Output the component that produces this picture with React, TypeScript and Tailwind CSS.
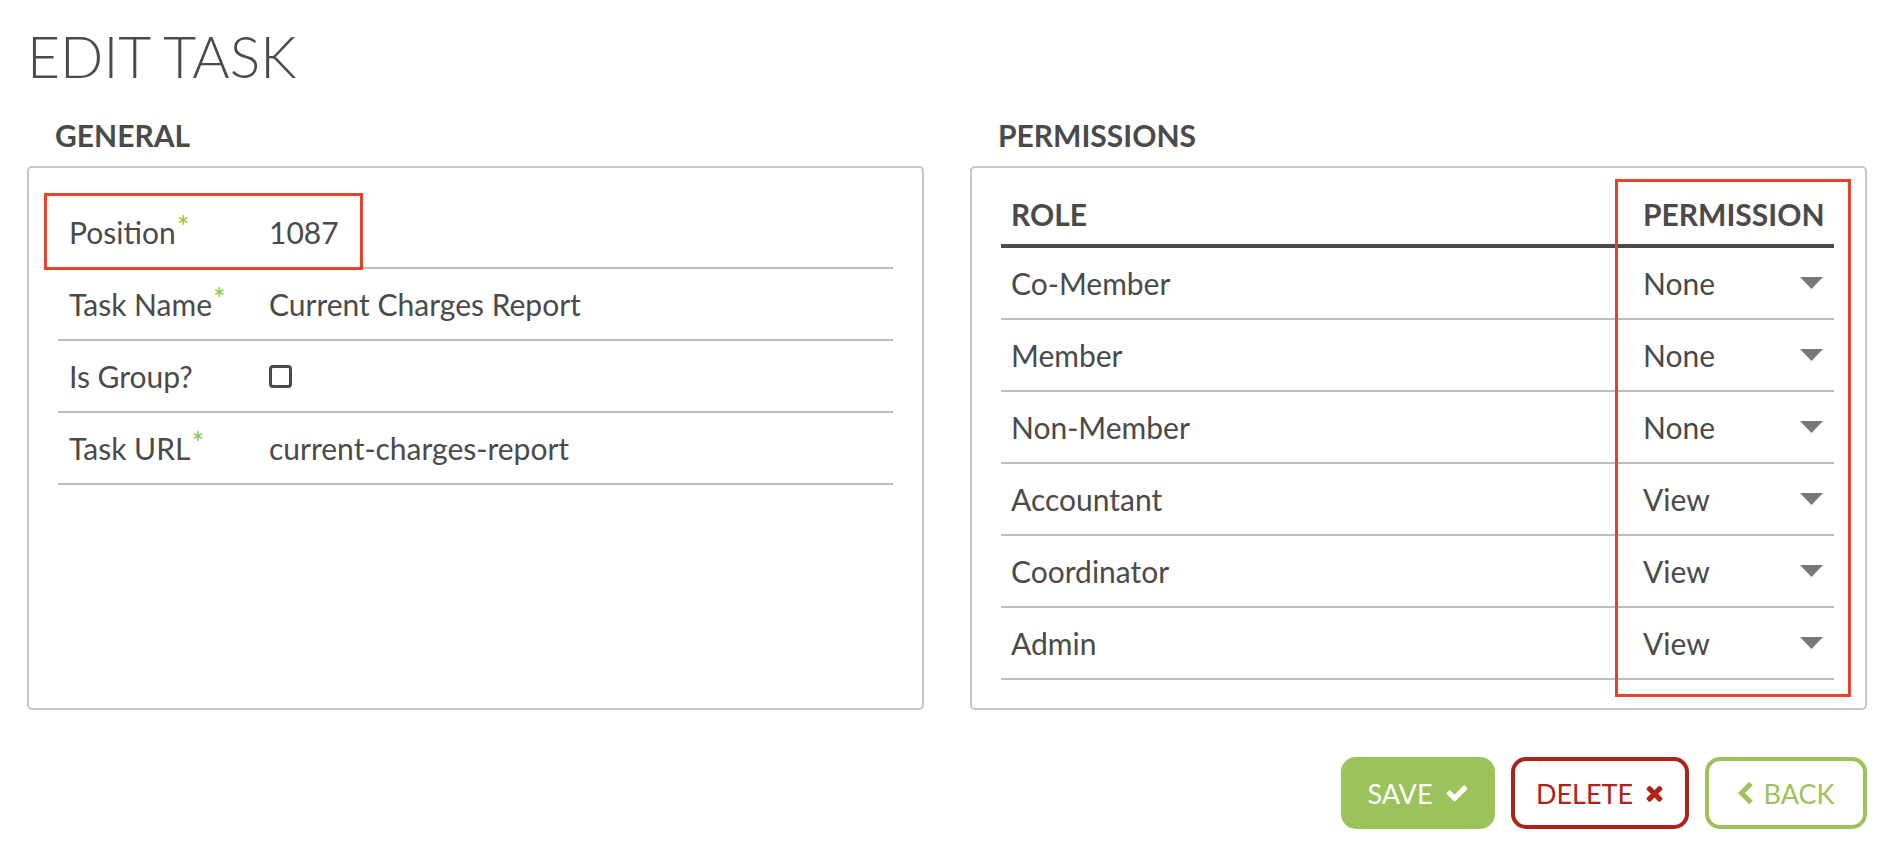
import React from 'react'

const generalRows = [
    { label: 'Position', required: true, value: '1087' },
    { label: 'Task Name', required: true, value: 'Current Charges Report' },
    { label: 'Is Group?', required: false, value: null },
    { label: 'Task URL', required: true, value: 'current-charges-report' },
]

const permissionRows = [
    { role: 'Co-Member', permission: 'None' },
    { role: 'Member', permission: 'None' },
    { role: 'Non-Member', permission: 'None' },
    { role: 'Accountant', permission: 'View' },
    { role: 'Coordinator', permission: 'View' },
    { role: 'Admin', permission: 'View' },
]

const CaretDown = () => (
    <svg width="23" height="12" viewBox="0 0 23 12">
        <polygon points="0,0 23,0 11.5,12" fill="#777777" />
    </svg>
)

const CheckIcon = () => (
    <svg width="24" height="24" viewBox="0 0 1792 1792">
        <path
            fill="currentColor"
            d="M1671 566q0 40-28 68l-724 724-136 136q-28 28-68 28t-68-28l-136-136-362-362q-28-28-28-68t28-68l136-136q28-28 68-28t68 28l294 295 656-657q28-28 68-28t68 28l136 136q28 28 28 68z"
        />
    </svg>
)

const TimesIcon = () => (
    <svg width="19" height="24" viewBox="0 0 1408 1792">
        <path
            fill="currentColor"
            d="M1298 1322q0 40-28 68l-136 136q-28 28-68 28t-68-28l-294-294-294 294q-28 28-68 28t-68-28l-136-136q-28-28-28-68t28-68l294-294-294-294q-28-28-28-68t28-68l136-136q28-28 68-28t68 28l294 294 294-294q28-28 68-28t68 28l136 136q28 28 28 68t-28 68l-294 294 294 294q28 28 28 68z"
        />
    </svg>
)

const ChevronLeft = () => (
    <svg width="16" height="24" viewBox="0 0 16 24">
        <polyline points="13,2.5 3.5,12 13,21.5" fill="none" stroke="currentColor" strokeWidth="5" strokeLinejoin="miter" />
    </svg>
)

const Asterisk = () => (
    <span className="relative -top-[6px] ml-[1px] text-[30px] leading-none text-[#8cc63e]">*</span>
)

const App: React.FC = () => {
    return (
        <div className="relative w-full min-h-[850px] bg-white font-[Lato,sans-serif] text-[#4a4a4a] pl-[27px] pr-[25px]">
            <h1 className="pt-[28px] text-[57px] font-light leading-none">EDIT TASK</h1>

            <div className="mt-[35px] grid grid-cols-2 gap-[46px]">
                {/* general */}
                <div className="flex flex-col">
                    <h2 className="pl-[28px] text-[30px] font-bold leading-none">GENERAL</h2>
                    <div className="mt-[16px] flex-1 rounded-[5px] border-2 border-[#c6c6c6] px-[29px] pt-[29px]">
                        {generalRows.map(row => (
                            <div key={row.label} className="flex h-[72px] items-center border-b-2 border-[#bdbdbd] pl-[11px] text-[30px]">
                                <div className="w-[200px] shrink-0">
                                    {row.label}
                                    {row.required && <Asterisk />}
                                </div>
                                {row.value !== null ? (
                                    <div>{row.value}</div>
                                ) : (
                                    <div className="h-[23px] w-[23px] rounded-[4px] border-[3px] border-[#4a4a4a]" />
                                )}
                            </div>
                        ))}
                    </div>
                </div>

                {/* permissions */}
                <div className="flex flex-col">
                    <h2 className="pl-[28px] text-[30px] font-bold leading-none">PERMISSIONS</h2>
                    <div className="mt-[16px] flex-1 rounded-[5px] border-2 border-[#c6c6c6] pl-[29px] pr-[31px] pt-[24px] pb-[28px]">
                        <div className="flex h-[56px] items-start border-b-4 border-[#4a4a4a] text-[30px] font-bold">
                            <div className="flex-1 pl-[10px]">ROLE</div>
                            <div className="w-[191px]">PERMISSION</div>
                        </div>
                        {permissionRows.map(row => (
                            <div key={row.role} className="flex h-[72px] items-center border-b-2 border-[#bdbdbd] text-[30px]">
                                <div className="flex-1 pl-[10px]">{row.role}</div>
                                <div className="flex w-[191px] items-center justify-between pr-[11px]">
                                    <span>{row.permission}</span>
                                    <CaretDown />
                                </div>
                            </div>
                        ))}
                    </div>
                </div>
            </div>

            <div className="mt-[47px] flex justify-end gap-[16px] text-[27px] leading-none">
                <button className="flex h-[72px] w-[154px] items-center justify-center gap-[12px] rounded-[15px] bg-[#9cc25b] text-white">
                    <span>SAVE</span>
                    <CheckIcon />
                </button>
                <button className="flex h-[72px] w-[178px] items-center justify-center gap-[12px] rounded-[15px] border-4 border-[#ae2219] text-[#ae2219]">
                    <span>DELETE</span>
                    <TimesIcon />
                </button>
                <button className="flex h-[72px] w-[162px] items-center justify-center gap-[10px] rounded-[15px] border-4 border-[#9cc25b] text-[#9cc25b]">
                    <ChevronLeft />
                    <span>BACK</span>
                </button>
            </div>

            {/* highlight annotations */}
            <div className="pointer-events-none absolute left-[44px] top-[193px] h-[77px] w-[319px] border-[3px] border-[#e8412c]" />
            <div className="pointer-events-none absolute left-[1615px] top-[179px] h-[518px] w-[236px] border-[3px] border-[#e8412c]" />
        </div>
    )
}

export default App
